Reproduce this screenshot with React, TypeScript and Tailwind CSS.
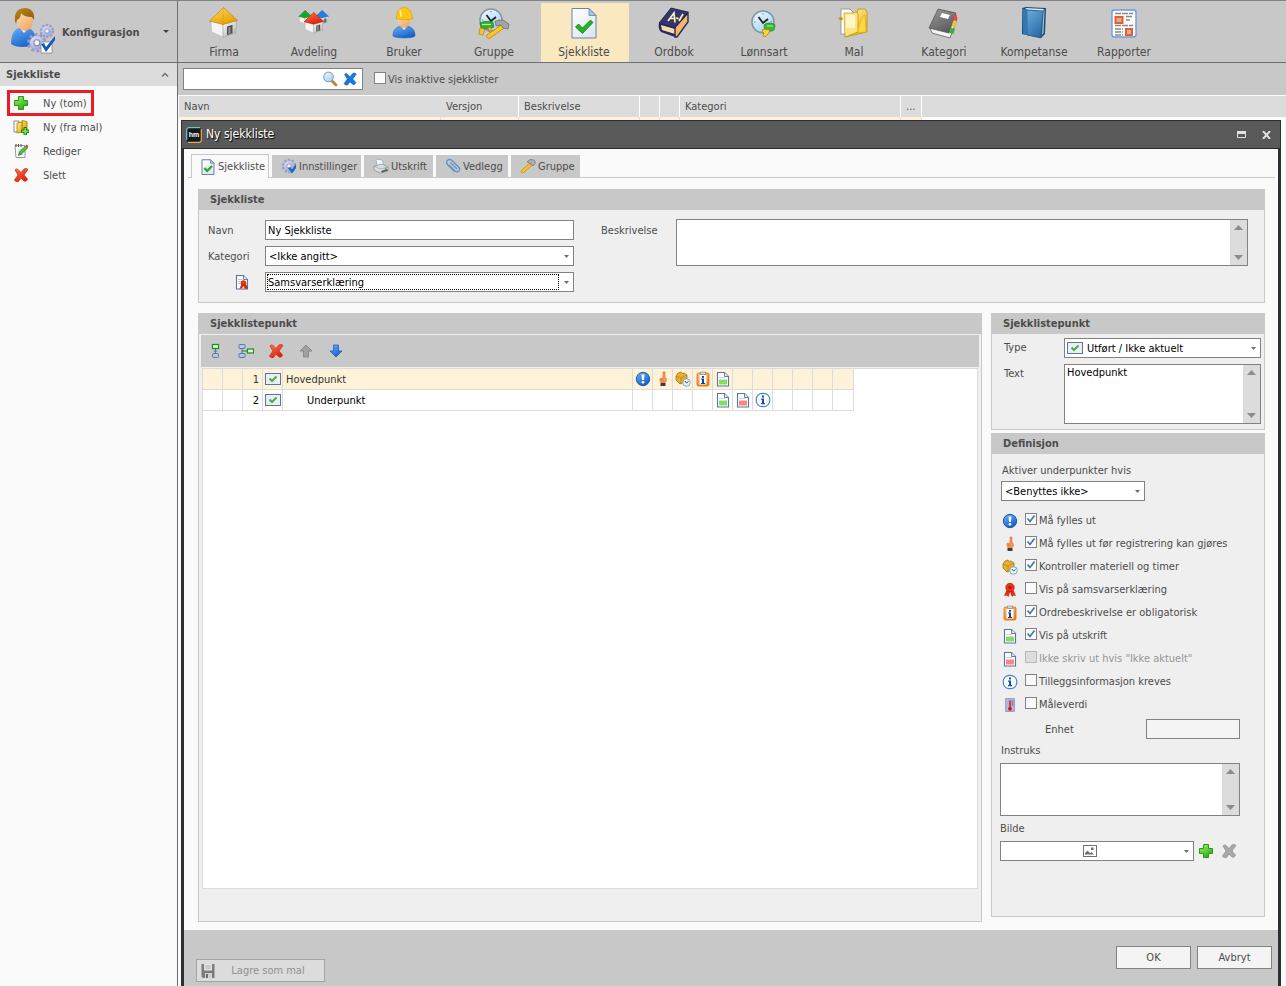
import type { ReactNode } from 'react'

/* ---------- Shared drawing pieces ---------- */

function Gradients() {
  const list = [
    ['gRoof', '#ffd95a', '#e8a000'],
    ['gWall', '#ffffff', '#b9b9b9'],
    ['gSkin', '#ffe0b8', '#f0a868'],
    ['gBlue', '#6fb3f5', '#1560c8'],
    ['gGreen', '#a4f25c', '#2fae1c'],
    ['gRed', '#ff7a55', '#dc2008'],
    ['gGold', '#fff0a0', '#e8b820'],
    ['gGlass', '#f4fbff', '#a8d4f4'],
    ['gGrey', '#9a9a9a', '#5c5c5c'],
    ['gGear', '#e4e6f8', '#a0a5d0'],
    ['gBook', '#6cacdc', '#2a6da8'],
    ['gPage', '#ffffff', '#dfe8f4'],
    ['gOrange', '#ffc070', '#f08020'],
    ['gHair', '#c08a20', '#8a5a08']
  ]
  return (
    <svg width="0" height="0" className="absolute" aria-hidden="true">
      <defs>
        {list.map(([id, from, to]) => (
          <linearGradient key={id} id={id} x1="0" y1="0" x2="0.6" y2="1">
            <stop offset="0" stopColor={from} />
            <stop offset="1" stopColor={to} />
          </linearGradient>
        ))}
      </defs>
    </svg>
  )
}

function Icon({ size = 16, box = 16, children }: { size?: number; box?: number; children: ReactNode }) {
  return (
    <svg width={size} height={size} viewBox={`0 0 ${box} ${box}`} className="block shrink-0" aria-hidden="true">
      {children}
    </svg>
  )
}

function House({ roof, edge }: { roof: string; edge: string }) {
  return (
    <>
      <path d="M3 13.500 15 17v13L3.500 25z" fill="#f4f4f4" stroke="#b0b0b0" strokeWidth=".5" />
      <path d="M15 17 28.500 13l-.8 13L15 30.500z" fill="url(#gWall)" stroke="#999" strokeWidth=".5" />
      <path d="m19 19.500 5.500-1.800v8.500l-5.500 2z" fill="#505050" />
      <path d="m20.300 20.500 2.200-.7v6.500l-2.200.8z" fill="#909090" />
      <path d="M15.500.500 29.500 13.500 15 17.500 1.500 14z" fill={roof} stroke={edge} strokeWidth=".6" strokeLinejoin="round" />
      <path d="M15.500.500 15 17.500" stroke={edge} strokeWidth=".5" opacity=".4" />
    </>
  )
}

function Gear() {
  return (
    <>
      <circle cx="8" cy="8" r="6" fill="none" stroke="#959ac8" strokeWidth="2.400" strokeDasharray="2.200 1.570" />
      <circle cx="8" cy="8" r="5.200" fill="url(#gGear)" stroke="#a0a5d0" strokeWidth=".5" />
      <circle cx="8" cy="8" r="2.200" fill="#f4f4fa" stroke="#8388ba" strokeWidth=".8" />
    </>
  )
}

function ClockFace() {
  return (
    <>
      <circle cx="13" cy="13" r="11" fill="url(#gGlass)" stroke="#7f97a8" strokeWidth="1.600" />
      <path d="m8.500 8 4.500 6 5-4" fill="none" stroke="#222" strokeWidth="1.800" />
      <path d="M13 4v1.500M13 20.500V22M4 13h1.500M20.500 13H22" stroke="#6a8aa4" />
    </>
  )
}

/* ---------- 32px toolbar icons ---------- */

const FirmaIcon = () => (
  <Icon size={32} box={32}>
    <House roof="url(#gRoof)" edge="#b87800" />
  </Icon>
)

const AvdelingIcon = () => (
  <Icon size={32} box={32}>
    <g transform="translate(0 3) scale(.46)">
      <House roof="#18a828" edge="#087010" />
    </g>
    <g transform="translate(17 3) scale(.46)">
      <House roof="#2080e8" edge="#1050a0" />
    </g>
    <g transform="translate(5 5) scale(.7)">
      <House roof="url(#gRed)" edge="#a81000" />
    </g>
  </Icon>
)

const BrukerIcon = () => (
  <Icon size={32} box={32}>
    <path d="M5 29c0-7 4-10 11-10s11 3 11 10c-3 2.500-19 2.500-22 0z" fill="url(#gBlue)" stroke="#1a5cb0" strokeWidth=".6" />
    <path d="m13 19 3 4 3-4z" fill="#fff" />
    <ellipse cx="16" cy="14" rx="6" ry="7" fill="url(#gSkin)" />
    <path d="M8.500 11c0-6 2.500-10.500 7.500-10.500s8 4.500 8 9.500l1.500 1.500c-4 1.500-13 1.500-17.500 0z" fill="#ffc810" stroke="#d89800" strokeWidth=".6" />
    <path d="M12 3c1 2 1 4 .8 6.500" stroke="#fff2a0" strokeWidth="1.600" fill="none" />
  </Icon>
)

const GruppeIcon = () => (
  <Icon size={32} box={32}>
    <ClockFace />
    <path d="M2 16c3-2 9-2 13-1l1 5c-4 2-9 2-13 1z" fill="#30b030" stroke="#107818" strokeWidth=".6" />
    <path d="M4 17.500h9" stroke="#b0f0a0" strokeWidth="1.200" />
    <path d="m2 21 5 1-2 6-4-1zM10 20l4 1-3 4z" fill="#f4c430" stroke="#a87800" strokeWidth=".6" />
    <path d="M9 28 23 18l3 3-14 10c-2 1-4-1-3-3z" fill="#ffc820" stroke="#b07800" strokeWidth=".7" />
    <path d="m17 14 8-1 6 4-1 5-5-1-2-3-5 1z" fill="#a4a4a4" stroke="#686868" strokeWidth=".7" />
  </Icon>
)

const SjekklisteIcon = ({ size = 32 }: { size?: number }) => (
  <Icon size={size} box={32}>
    <path d="M4 1.500h17l7 7v22.500H4z" fill="url(#gPage)" stroke="#6482ac" strokeWidth={size > 16 ? 1 : 2} />
    <path d="M21 1.500v7h7z" fill="#a8c8e8" stroke="#6482ac" strokeWidth={size > 16 ? 0.8 : 1.5} />
    <path d="m7.500 20 3-3 4 4 8-8 2.500 2.500-10.500 11z" fill="#22b422" stroke="#0d8010" strokeWidth=".8" />
  </Icon>
)

const OrdbokIcon = () => (
  <Icon size={32} box={32}>
    <path d="m1 16 16 4v10L3 25c-2-2-3-6-2-9z" fill="#28285c" />
    <path d="m3 18 14 4v5L4 23z" fill="#f8dca8" />
    <path d="M17 20 30 6v9L19 30l-2 0z" fill="#f0b868" stroke="#28285c" strokeWidth="1.400" />
    <path d="m13 1 17 4-13 16-16-5z" fill="#34346e" stroke="#1c1c4c" strokeWidth=".8" />
    <path d="m10 14 6-8 1 9.500M12 11.500h4.500M18 11l2.500.6M21 14l4-7" fill="none" stroke="#fff3b0" strokeWidth="1.700" />
  </Icon>
)

const LonnsartIcon = () => (
  <Icon size={32} box={32}>
    <g transform="translate(2 2)">
      <ClockFace />
    </g>
    <path d="M16 18c3-3 9-2 11 0l-1 5c-3 2-7 1-9 0z" fill="#38b838" stroke="#148018" strokeWidth=".7" />
    <path d="M19 19h6" stroke="#b8f0a8" />
    <path d="m15 22 7 1-1 3-4 4-2-1 1-3-2-1z" fill="#ffd030" stroke="#a87800" strokeWidth=".7" />
  </Icon>
)

const MalIcon = () => (
  <Icon size={32} box={32}>
    <path d="M3 2h9l3 3v22H3z" fill="#fff" stroke="#888" strokeWidth=".8" />
    <path d="M1 11h3v2M1 11l1 2" stroke="#d8a000" strokeWidth="1.400" />
    <path d="M15 6h4l1-4h7l1 2h1v21L7 30z" fill="url(#gGold)" stroke="#c89000" strokeWidth=".8" />
    <path d="m18 26 7-17 2-1 1 17z" fill="#ffd740" stroke="#d8a420" strokeWidth=".6" />
    <path d="M6 6h8l4-1 2 2v18L7 30z" fill="#fce888" stroke="#c89000" strokeWidth=".8" opacity=".9" />
    <path d="M8 8h9v13H8z" fill="#fffce0" opacity=".7" />
  </Icon>
)

const KategoriIcon = () => (
  <Icon size={32} box={32}>
    <path d="m2 21 2 5 18 5 7-19-1-4z" fill="#f4f4f4" stroke="#505050" strokeWidth=".7" />
    <path d="M10 2 28 6 21 26 1 21z" fill="url(#gGrey)" stroke="#4c4c4c" strokeWidth=".7" />
    <path d="m14 6 8 2-2 4-8-2z" fill="#fff" />
    <path d="m26 8 3 .6V14l-3.500-.5z" fill="#f04820" />
    <path d="m25 14.500 3.500.6-1 5-4-.6z" fill="#f4c020" />
    <path d="m23 21 4 .6-1.500 5.400-4-.7z" fill="#30b830" />
  </Icon>
)

const KompetanseIcon = () => (
  <Icon size={32} box={32}>
    <path d="m4 1 4-1 20 1-1 26-4 4L4 27z" fill="#184c78" />
    <path d="m9 3 16 1-2 27L9 28z" fill="url(#gBook)" stroke="#1c5484" strokeWidth=".6" />
    <path d="m4 1 5 2v25l-4-1z" fill="#3478b0" />
    <path d="m7 1 19 1-1 1.500L9 2.500z" fill="#e8f0f8" />
    <path d="m25.500 4 1-2-1 24-1.500 2z" fill="#a8c8e0" />
  </Icon>
)

const RapporterIcon = () => (
  <Icon size={32} box={32}>
    <rect x="4" y="3" width="24" height="27" rx="2.500" fill="#fff" stroke="#6c9ae0" strokeWidth="1.400" />
    <path
      d="M7 6.500h18M18 9.500h7M18 13h4M7 18.500h18M7 22h8M7 25h8M7 28h8"
      stroke="#868686"
      strokeWidth="1.600"
      strokeDasharray="6 1"
    />
    <rect x="7.500" y="10" width="7" height="6" fill="#b8b8b8" stroke="#f45a20" strokeWidth="2" />
    <rect x="18" y="22" width="6" height="6" fill="#b8b8b8" stroke="#f45a20" strokeWidth="2" />
  </Icon>
)

/* ---------- 16px icons ---------- */

const ConfigUserIcon = () => (
  <Icon size={48} box={48}>
    <path d="M1 36c0-12 5-17 13-17s12 6 12 16c-5 5-20 5-25 1z" fill="url(#gBlue)" />
    <path d="m9 19 5 6 5-6z" fill="#fff" />
    <ellipse cx="15" cy="13" rx="8" ry="10" fill="url(#gSkin)" />
    <path d="M5 13C4 3 9 0 15 0c6 0 10 4 9 12l-2-3c-4 0-9-1-11-4 0 4-2 6-4 7l-1 4z" fill="url(#gHair)" />
    <g transform="translate(29 15)">
      <Gear />
    </g>
    <g transform="translate(16 24) scale(1.350)">
      <Gear />
    </g>
    <path d="M31 34h11v11H31z" fill="#fff" stroke="#888" strokeWidth=".8" />
    <path d="m31 36 3-1 2 4 9-11v4l-9 12z" fill="#1258b8" />
  </Icon>
)

const PlusIcon = () => (
  <Icon>
    <path
      d="M5.500 1.500h5v4h4v5h-4v4h-5v-4h-4v-5h4z"
      fill="url(#gGreen)"
      stroke="#259a1c"
      strokeLinejoin="round"
    />
  </Icon>
)

const CrossIcon = ({ fill = 'url(#gRed)', edge = '#c02808' }: { fill?: string; edge?: string }) => (
  <Icon>
    <path
      d="M2 3c1-1.500 2.500-1.500 3.500 0L8 5.500 11 2c1.500-1 3-.5 4 .5L11 8l3.500 4c-.5 2-2 2.500-3.500 2L8 11l-2.500 3.500C4 15 2 14.500 1.500 13L5 8z"
      fill={fill}
      stroke={edge}
      strokeWidth=".7"
    />
  </Icon>
)

const FolderPlusIcon = () => (
  <Icon>
    <path d="M1 2h5v11H1z" fill="#fff" stroke="#707070" strokeWidth=".8" />
    <path d="m9 1.500 5 1v10H9z" fill="url(#gRoof)" stroke="#a87c00" strokeWidth=".8" />
    <path d="m4 4 5-1v10l-5 1z" fill="url(#gGold)" stroke="#a87c00" strokeWidth=".8" />
    <path d="M11 8.500h2.500V11H16v2.500h-2.500V16H11v-2.500H8.500V11H11z" fill="#7ce048" stroke="#0c7810" strokeWidth=".9" />
  </Icon>
)

const EditIcon = () => (
  <Icon>
    <path d="M2 2.500h10v12H3z" fill="#fff" stroke="#8a8a9a" strokeWidth=".9" />
    <path d="M3 1v3M5.500 1v3M8 1v3" stroke="#555" />
    <path d="M5 7h5M5 9h4M5 11.500h5" stroke="#b8c0d8" strokeWidth=".8" />
    <path d="m5.500 12.500 1-3.500 6-6 2 2-6 6z" fill="#50c838" stroke="#187810" strokeWidth=".8" />
    <path d="m12 3.500 1.500-2 2 1.800-1.500 1.800z" fill="#e04040" />
  </Icon>
)

const SearchIcon = () => (
  <Icon>
    <path d="m9.500 9.500 4.500 4.500" stroke="#c08040" strokeWidth="2.800" strokeLinecap="round" />
    <circle cx="6.500" cy="6" r="4.800" fill="url(#gGlass)" stroke="#88aac4" strokeWidth="1.200" />
  </Icon>
)

const GearCheckIcon = () => (
  <Icon>
    <Gear />
    <path d="m7 10 2-1 2 2.500L15 6v4l-4 5.500z" fill="#1c68c8" />
  </Icon>
)

const PrinterIcon = () => (
  <Icon>
    <path d="m3 1 6 1 2 5-7 1z" fill="#f0f6fc" stroke="#98a4b4" strokeWidth=".7" />
    <path d="m1 8 8-2 6 3v4l-8 2-6-3z" fill="#dcdfe2" stroke="#85898e" strokeWidth=".7" />
    <path d="m1 8 6 3 8-2" fill="none" stroke="#909498" strokeWidth=".6" />
    <path d="m8 13 6-2 1 1.500-6 2z" fill="#50565c" />
    <circle cx="12.500" cy="10.500" r=".8" fill="#40c030" />
  </Icon>
)

const ClipIcon = () => (
  <Icon>
    <path
      d="m4 7 6 6c3 2 6-1 4-3.500L7 2.500C4 0 0 3 2.500 6.500l7 7M5.500 4.500l6.500 6.500"
      fill="none"
      stroke="#5c94cc"
      strokeWidth="1.300"
    />
  </Icon>
)

const HammerIcon = () => (
  <Icon>
    <path d="m1.500 12.500 8-7 2 2-8 7c-1.500 1-3-.5-2-2z" fill="#ffc820" stroke="#b88000" strokeWidth=".7" />
    <path d="m7 4 3-2.500 4 .5 1.500 3-2.500 3-2-2.500z" fill="#b0b0b0" stroke="#707070" strokeWidth=".7" />
  </Icon>
)

const Page = ({ children }: { children: ReactNode }) => (
  <Icon>
    <path d="M2.500 1.500h7l4 4v9.500h-11z" fill="#fff" stroke="#5874a0" strokeWidth="1.100" />
    <path d="M9.500 1.500v4h4" fill="#dce8f8" stroke="#5874a0" strokeWidth=".9" />
    {children}
  </Icon>
)

const GreenPageIcon = () => (
  <Page>
    <path d="M4 6.500h6" stroke="#c0d0e8" />
    <path d="M4 8.500h8v5H4z" fill="#84dc60" />
  </Page>
)

const RedPageIcon = () => (
  <Page>
    <path d="M4 6.500h6" stroke="#c0d0e8" />
    <path d="M4 8.500h8v5H4z" fill="#ff8484" />
  </Page>
)

const CertificateIcon = () => (
  <Page>
    <path d="M4 5.500h4M4 7.500h3M4 9.500h3" stroke="#b8c8e0" />
    <circle cx="9.500" cy="9" r="2.800" fill="#e03818" />
    <path d="m7.500 10-2 5 2.500-.8L9.500 12l1.500 3 3-.5-2-4.500z" fill="#d42808" />
  </Page>
)

const ImportantIcon = () => (
  <Icon>
    <circle cx="8" cy="8" r="6.700" fill="url(#gBlue)" stroke="#0c50a8" strokeWidth=".9" />
    <path d="M6.500 3.500h3L9 9H7z" fill="#fff" />
    <circle cx="8" cy="11.300" r="1.300" fill="#fff" />
  </Icon>
)

const FingerIcon = () => (
  <Icon>
    <path d="M8 1h2v6l1.300.5v2.500L9.800 12H6.200L5 9.800V7.500L8 7z" fill="#f8985c" stroke="#d8692c" strokeWidth=".6" />
    <path d="M6.500 8v2M8.200 8.300v2" stroke="#d8692c" strokeWidth=".6" />
    <path d="M5.500 12h5v3h-5z" fill="#3c3c44" />
  </Icon>
)

const BoxClockIcon = () => (
  <Icon>
    <path d="m1 5 2-3 3-1 1 1.500 2-.5 3 2v6l-7 3-4-4z" fill="#e8b030" stroke="#a87410" strokeWidth=".8" />
    <path d="m1 5 5 2 6-3M6 7v6" fill="none" stroke="#b07c14" strokeWidth=".7" />
    <circle cx="11.500" cy="11.500" r="3.800" fill="#e4f4ff" stroke="#78a0bc" strokeWidth=".9" />
    <path d="m9.800 10 1.700 2 2-1.500" fill="none" stroke="#333" strokeWidth=".9" />
  </Icon>
)

const RosetteIcon = () => (
  <Icon>
    <path d="m5 7-3 7 3-.5 1.500 1.500L8 10l2 5 1.500-1.500 2.500.5-3-7z" fill="#e03010" />
    <circle cx="8" cy="5.500" r="4.200" fill="#e83818" stroke="#c01c00" strokeWidth=".8" />
    <circle cx="8" cy="5.500" r="1.800" fill="#b01800" />
  </Icon>
)

const ClipboardIcon = () => (
  <Icon>
    <rect x="2" y="2" width="12" height="13" rx="1.500" fill="url(#gOrange)" stroke="#d07010" strokeWidth=".8" />
    <path d="M4.500 4h7v9.500h-7z" fill="#fff" />
    <path d="M5.500 1h5v2.500h-5z" fill="#d8d8d8" stroke="#808080" strokeWidth=".6" />
    <path d="M7 5h2v1.700H7zM6 7.500h3V12h1.200v1H6v-1h1V8.500H6z" fill="#1040a0" />
  </Icon>
)

const InfoIcon = () => (
  <Icon>
    <rect x="1.300" y="1.300" width="13.400" height="13.400" rx="6" fill="#fff" stroke="#4888d0" strokeWidth="1.200" />
    <path d="M7 3.500h2v2H7zM6 6.500h3V11h1v1.200H6V11h1V7.700H6z" fill="#1050b8" />
  </Icon>
)

const ThermoIcon = () => (
  <Icon>
    <path d="M3.500 1.500h9v13h-9z" fill="#b4b4dc" stroke="#8888b8" strokeWidth=".7" />
    <path d="M9.500 4h2M9.500 6h2M9.500 8h2" stroke="#505078" strokeWidth=".8" />
    <path d="M8 3.500v8" stroke="#d82020" strokeWidth="1.600" />
    <circle cx="8" cy="11.800" r="1.900" fill="#d01818" />
  </Icon>
)

const CheckTypeIcon = () => (
  <svg width="16" height="12" viewBox="0 0 16 12" className="block shrink-0" aria-hidden="true">
    <rect x=".5" y=".5" width="15" height="11" fill="#eaeefa" stroke="#5c7890" />
    <path d="m4.500 5.500 2.500 2.500 4.500-4.500" fill="none" stroke="#4cb034" strokeWidth="2" />
  </svg>
)

const AddBelowIcon = () => (
  <Icon>
    <path d="M7.500 5v6M5.500 8h4" stroke="#5478a8" />
    <rect x="4.500" y="1.500" width="6" height="4" fill="#e0ffd8" stroke="#1c8c1c" strokeWidth="1.200" />
    <rect x="4.500" y="10.500" width="6" height="4" rx="1" fill="#b4c8e4" stroke="#5478a8" />
  </Icon>
)

const AddChildIcon = () => (
  <Icon>
    <path d="M4 5v6" stroke="#5478a8" />
    <path d="M4 8h6" stroke="#1c8c1c" />
    <rect x="1" y="1.500" width="6" height="4" rx="1" fill="#b4c8e4" stroke="#5478a8" />
    <rect x="1" y="10.500" width="6" height="4" rx="1" fill="#b4c8e4" stroke="#5478a8" />
    <rect x="9.500" y="6" width="6" height="4" fill="#e0ffd8" stroke="#1c8c1c" strokeWidth="1.200" />
  </Icon>
)

const ArrowUpIcon = () => (
  <Icon>
    <path d="m8 2 6 6h-3.500v6h-5V8H2z" fill="#a0a0a0" stroke="#808080" strokeWidth=".8" />
  </Icon>
)

const ArrowDownIcon = () => (
  <Icon>
    <path d="m8 14 6-6h-3.500V2h-5v6H2z" fill="url(#gBlue)" stroke="#1860c0" strokeWidth=".8" />
  </Icon>
)

const DisketteIcon = () => (
  <Icon>
    <path d="M1.500 1h13v14H3l-1.500-1.500z" fill="#7c7c7c" />
    <path d="M4 1h8v6.500H4z" fill="#e4e4e4" />
    <path d="M5 3h6M5 5h6" stroke="#b0b0b0" />
    <path d="M5 10h7v5H5z" fill="#d0d0d0" />
    <path d="M6 11h2v4H6z" fill="#707070" />
  </Icon>
)

const PictureIcon = () => (
  <svg width="14" height="12" viewBox="0 0 14 12" className="block" aria-hidden="true">
    <rect x=".5" y=".5" width="13" height="11" fill="#fff" stroke="#707070" />
    <path d="M2 9.500V8l2.500-2.500L7 8l1.500-1L11 9.500z" fill="#707070" />
    <rect x="8" y="2.500" width="2.500" height="2.500" fill="#707070" />
  </svg>
)

const LogoIcon = () => (
  <svg width="16" height="16" viewBox="0 0 16 16" className="block shrink-0" aria-hidden="true">
    <rect x=".7" y=".7" width="14.600" height="14.600" rx="2.500" fill="#14181c" />
    <path d="M14 .7H3A2.300 2.300 0 0 0 .7 3v10" fill="none" stroke="#6cc8c0" strokeWidth="1.200" />
    <path d="M15.300 2v11a2.300 2.300 0 0 1-2.300 2.300H2" fill="none" stroke="#e0b050" strokeWidth="1.200" />
    <text x="8" y="10" textAnchor="middle" fontSize="7" fontWeight="700" fill="#fff" fontFamily="Liberation Sans">
      hm
    </text>
  </svg>
)

const Caret = () => (
  <svg width="5" height="3" viewBox="0 0 5 3" className="block" aria-hidden="true">
    <path d="M0 0h5L2.500 3z" fill="#6e6e6e" />
  </svg>
)

/* ---------- Form controls ---------- */

type SelectProps = { id: string; value: string; className?: string; inset?: string; focused?: boolean; icon?: ReactNode }

function Select({ id, value, className = '', inset = 'pl-1', focused, icon }: SelectProps) {
  return (
    <div className={`relative h-5 border border-[#828282] bg-white ${className}`}>
      <select
        id={id}
        className={`block h-full w-full appearance-none bg-transparent pr-4 text-black outline-none ${inset}`}
      >
        <option>{value}</option>
      </select>
      {focused && (
        <span className="pointer-events-none absolute inset-y-px right-[14px] left-px border border-dotted border-black" />
      )}
      {icon && <span className="pointer-events-none absolute inset-y-0 left-[2px] flex items-center">{icon}</span>}
      <span className="pointer-events-none absolute inset-y-0 right-1 flex items-center">
        <Caret />
      </span>
    </div>
  )
}

function TextArea({ id, value = '', className = '' }: { id: string; value?: string; className?: string }) {
  return (
    <div className={`flex border border-[#828282] bg-white ${className}`}>
      <textarea
        id={id}
        defaultValue={value}
        className="block h-full min-w-0 flex-1 resize-none overflow-hidden px-[2px] text-black outline-none"
      />
      <div className="flex w-[17px] shrink-0 flex-col items-center justify-between bg-[#dcdcdc] py-[5px]">
        <svg width="9" height="5" viewBox="0 0 9 5" aria-hidden="true">
          <path d="M0 5h9L4.500 0z" fill="#8c8c8c" />
        </svg>
        <svg width="9" height="5" viewBox="0 0 9 5" aria-hidden="true">
          <path d="M0 0h9L4.500 5z" fill="#8c8c8c" />
        </svg>
      </div>
    </div>
  )
}

function CheckBox({ label, checked, disabled }: { label: string; checked?: boolean; disabled?: boolean }) {
  return (
    <label className={`flex items-start gap-[2px] ${disabled ? 'text-[#969696]' : ''}`}>
      <span className="grid size-3 shrink-0">
        <input
          type="checkbox"
          defaultChecked={checked}
          disabled={disabled}
          className="peer col-start-1 row-start-1 size-3 appearance-none border border-[#828282] bg-[#fafafa] disabled:border-[#b8b8b8] disabled:bg-[#dcdcdc]"
        />
        <svg
          viewBox="0 0 12 12"
          className="pointer-events-none invisible col-start-1 row-start-1 size-3 peer-checked:visible"
          aria-hidden="true"
        >
          <path d="m2.500 5.500 2.500 3 4.500-6" fill="none" stroke="#3c78b8" strokeWidth="1.700" />
        </svg>
      </span>
      {label}
    </label>
  )
}

function Panel({ title, className = '', children }: { title: string; className?: string; children: ReactNode }) {
  return (
    <section className={`flex flex-col border border-t-0 border-[#c8c8c8] bg-[#efefef] ${className}`}>
      <h2 className="flex h-[21px] shrink-0 items-center bg-[#c8c8c8] pl-[11px] font-bold">{title}</h2>
      {children}
    </section>
  )
}

/* ---------- Data ---------- */

const toolbar = [
  { name: 'Firma', icon: FirmaIcon },
  { name: 'Avdeling', icon: AvdelingIcon },
  { name: 'Bruker', icon: BrukerIcon },
  { name: 'Gruppe', icon: GruppeIcon },
  { name: 'Sjekkliste', icon: SjekklisteIcon, active: true },
  { name: 'Ordbok', icon: OrdbokIcon },
  { name: 'Lønnsart', icon: LonnsartIcon },
  { name: 'Mal', icon: MalIcon },
  { name: 'Kategori', icon: KategoriIcon },
  { name: 'Kompetanse', icon: KompetanseIcon },
  { name: 'Rapporter', icon: RapporterIcon }
]

const actions = [
  { name: 'Ny (tom)', icon: PlusIcon, marked: true },
  { name: 'Ny (fra mal)', icon: FolderPlusIcon },
  { name: 'Rediger', icon: EditIcon },
  { name: 'Slett', icon: CrossIcon }
]

const columns = [
  { name: 'Navn', width: 'w-[262px]', line: '' },
  { name: 'Versjon', width: 'w-[78px]', line: 'border-r' },
  { name: 'Beskrivelse', width: 'w-[121px]', line: 'border-r' },
  { name: '', width: 'w-[20px]', line: 'border-r' },
  { name: '', width: 'w-[20px]', line: 'border-r' },
  { name: 'Kategori', width: 'w-[221px]', line: 'border-r' },
  { name: '...', width: 'w-[21px]', line: 'border-r' }
]

const tabs = [
  { name: 'Sjekkliste', icon: <SjekklisteIcon size={16} />, width: 'w-[78px]', active: true },
  { name: 'Innstillinger', icon: <GearCheckIcon />, width: 'w-[89px]' },
  { name: 'Utskrift', icon: <PrinterIcon />, width: 'w-[69px]' },
  { name: 'Vedlegg', icon: <ClipIcon />, width: 'w-[72px]' },
  { name: 'Gruppe', icon: <HammerIcon />, width: 'w-[69px]' }
]

const rows = [
  {
    no: 1,
    name: 'Hovedpunkt',
    selected: true,
    flags: [ImportantIcon, FingerIcon, BoxClockIcon, ClipboardIcon, GreenPageIcon, null, null, null, null, null, null]
  },
  {
    no: 2,
    name: 'Underpunkt',
    selected: false,
    flags: [null, null, null, null, GreenPageIcon, RedPageIcon, InfoIcon, null, null, null, null]
  }
]

const options = [
  { label: 'Må fylles ut', icon: ImportantIcon, checked: true },
  { label: 'Må fylles ut før registrering kan gjøres', icon: FingerIcon, checked: true },
  { label: 'Kontroller materiell og timer', icon: BoxClockIcon, checked: true },
  { label: 'Vis på samsvarserklæring', icon: RosetteIcon },
  { label: 'Ordrebeskrivelse er obligatorisk', icon: ClipboardIcon, checked: true },
  { label: 'Vis på utskrift', icon: GreenPageIcon, checked: true },
  { label: 'Ikke skriv ut hvis "Ikke aktuelt"', icon: RedPageIcon, disabled: true },
  { label: 'Tilleggsinformasjon kreves', icon: InfoIcon },
  { label: 'Måleverdi', icon: ThermoIcon }
]

/* ---------- Page parts ---------- */

function Sidebar() {
  return (
    <aside className="flex w-[178px] shrink-0 flex-col border-r border-[#6e6e6e] bg-[#fafafa]">
      <button
        type="button"
        className="flex h-[62px] items-center border-b border-[#6e6e6e] bg-[#c8c8c8] pr-2 pl-[10px] font-bold"
      >
        <ConfigUserIcon />
        <span className="ml-1 flex-1 pt-[2px] text-left">Konfigurasjon</span>
        <svg width="6" height="3" viewBox="0 0 6 3" aria-hidden="true">
          <path d="M0 0h6L3 3z" fill="#404040" />
        </svg>
      </button>
      <h2 className="flex h-[23px] items-center justify-between bg-[#dcdcdc] pr-2 pl-[6px] font-bold">
        Sjekkliste
        <svg width="8" height="5" viewBox="0 0 8 5" aria-hidden="true">
          <path d="m1 4.500 3-3 3 3" fill="none" stroke="#707070" strokeWidth="1.500" />
        </svg>
      </h2>
      <nav className="flex flex-col items-start pt-[5px]">
        {actions.map((action) => (
          <button
            key={action.name}
            type="button"
            className={`ml-2 flex h-6 items-center gap-[14px] pr-[6px] pl-[5px] ${
              action.marked ? 'outline-3 -outline-offset-2 outline-[#ed1c24]' : ''
            }`}
          >
            <action.icon />
            {action.name}
          </button>
        ))}
      </nav>
    </aside>
  )
}

function TopBar() {
  return (
    <nav className="flex h-[62px] shrink-0 gap-[2px] border-b border-[#6e6e6e] bg-[#c8c8c8] pt-[2px] pl-[3px] text-[12px]">
      {toolbar.map((item) => (
        <button
          key={item.name}
          type="button"
          className={`flex w-[88px] flex-col items-center pt-1 pr-[2px] ${item.active ? 'bg-[#fae8c0]' : ''}`}
        >
          <item.icon />
          <span className="mt-[5px] leading-4">{item.name}</span>
        </button>
      ))}
    </nav>
  )
}

function FilterBar() {
  return (
    <div className="flex h-8 shrink-0 items-center bg-[#c8c8c8] pl-[5px]">
      <div className="flex h-[22px] w-[180px] items-center border border-[#828282] bg-white pr-1">
        <input type="text" aria-label="Søk" className="h-full min-w-0 flex-1 px-1 text-black outline-none" />
        <button type="button" aria-label="Søk" className="mr-1">
          <SearchIcon />
        </button>
        <button type="button" aria-label="Tøm søk" className="scale-90">
          <CrossIcon fill="#1878e0" edge="#1060b8" />
        </button>
      </div>
      <div className="ml-[11px]">
        <CheckBox label="Vis inaktive sjekklister" />
      </div>
    </div>
  )
}

function ListHeader() {
  return (
    <table className="w-full shrink-0 table-fixed border-separate border-spacing-0 border-t border-l border-[#fafafa]">
      <thead>
        <tr className="h-[21px] bg-[#dcdcdc]">
          {columns.map((column, i) => (
            <th
              key={i}
              scope="col"
              className={`border-white p-0 pl-[5px] text-left font-normal ${column.width} ${column.line}`}
            >
              {column.name}
            </th>
          ))}
          <th scope="col" className="p-0" />
        </tr>
      </thead>
      <tbody>
        <tr className="h-[3px]">
          {columns.map((column, i) => (
            <td key={i} className="border-r border-[#dcdcdc] bg-[#fef2d8] p-0" />
          ))}
          <td className="bg-white p-0" />
        </tr>
      </tbody>
    </table>
  )
}

function Tabs() {
  return (
    <div role="tablist" className="mr-[3px] ml-1 flex h-6 shrink-0 items-end gap-[3px] border-b border-[#c8c8c8] pl-[3px]">
      {tabs.map((tab) => (
        <button
          key={tab.name}
          type="button"
          role="tab"
          aria-selected={!!tab.active}
          className={`flex items-center gap-[2px] whitespace-nowrap ${tab.width} ${
            tab.active
              ? '-mb-px h-6 border border-b-0 border-[#c8c8c8] bg-[#fafafa] pl-2'
              : 'h-[22px] bg-[#c8c8c8] pl-[9px]'
          }`}
        >
          {tab.icon}
          {tab.name}
        </button>
      ))}
    </div>
  )
}

function ChecklistPanel() {
  return (
    <Panel title="Sjekkliste">
      <div className="flex items-start pt-[9px] pr-4 pb-[10px] pl-[9px]">
        <div className="grid grid-cols-[57px_309px] items-center gap-y-[6px] pt-px">
          <label htmlFor="navn">Navn</label>
          <input
            id="navn"
            type="text"
            defaultValue="Ny Sjekkliste"
            className="h-5 w-full border border-[#828282] bg-white px-[2px] text-black outline-none"
          />
          <label htmlFor="kategori">Kategori</label>
          <Select id="kategori" value="<Ikke angitt>" inset="pl-[3px]" />
          <label htmlFor="erklaering" aria-label="Samsvarserklæring" className="flex justify-end pr-[15px]">
            <CertificateIcon />
          </label>
          <Select id="erklaering" value="Samsvarserklæring" inset="pl-[2px]" focused />
        </div>
        <label htmlFor="beskrivelse" className="ml-[27px] flex h-[22px] w-[75px] shrink-0 items-center">
          Beskrivelse
        </label>
        <TextArea id="beskrivelse" className="h-[47px] min-w-0 flex-1" />
      </div>
    </Panel>
  )
}

function PointsPanel() {
  const tools = [
    { name: 'Nytt punkt', icon: <AddBelowIcon /> },
    { name: 'Nytt underpunkt', icon: <AddChildIcon /> },
    { name: 'Slett', icon: <CrossIcon /> },
    { name: 'Flytt opp', icon: <ArrowUpIcon /> },
    { name: 'Flytt ned', icon: <ArrowDownIcon /> }
  ]
  return (
    <Panel title="Sjekklistepunkt" className="min-w-0 flex-1">
      <div className="mx-[2px] mt-px flex h-8 shrink-0 items-center gap-[14px] bg-[#c8c8c8] pl-[7px]">
        {tools.map((tool) => (
          <button key={tool.name} type="button" aria-label={tool.name}>
            {tool.icon}
          </button>
        ))}
      </div>
      <div className="mx-[3px] mt-px mb-8 flex-1 border border-[#dcdcdc] bg-white">
        <table className="w-[651px] table-fixed border-separate border-spacing-0 text-black">
          <tbody>
            {rows.map((row) => (
              <tr
                key={row.no}
                className={`h-[21px] *:border-r *:border-b *:border-[#dcdcdc] *:p-0 ${row.selected ? 'bg-[#fef2d8] text-[#333]' : ''}`}
              >
                <td className="w-[20px]" />
                <td className="w-[20px]" />
                <td className="w-[20px] text-right">
                  <span className="pr-[3px]">{row.no}</span>
                </td>
                <td className="w-[20px]">
                  <span className="flex justify-center">
                    <CheckTypeIcon />
                  </span>
                </td>
                <td className="w-[350px]">
                  <span className={row.selected ? 'pl-[3px]' : 'pl-6'}>{row.name}</span>
                </td>
                {row.flags.map((Flag, i) => (
                  <td key={i} className={i < row.flags.length - 1 ? 'w-[20px]' : ''}>
                    <span className="flex justify-center">{Flag && <Flag />}</span>
                  </td>
                ))}
              </tr>
            ))}
          </tbody>
        </table>
      </div>
    </Panel>
  )
}

function PointDetails() {
  return (
    <div className="flex w-[274px] shrink-0 flex-col gap-[3px] pb-[5px]">
      <Panel title="Sjekklistepunkt">
        <div className="grid grid-cols-[60px_197px] items-start gap-y-[6px] pt-1 pb-[5px] pl-3">
          <label htmlFor="type" className="leading-5">
            Type
          </label>
          <Select id="type" value="Utført / Ikke aktuelt" inset="pl-[22px]" icon={<CheckTypeIcon />} />
          <label htmlFor="text" className="leading-5">
            Text
          </label>
          <TextArea id="text" value="Hovedpunkt" className="h-[60px]" />
        </div>
      </Panel>
      <Panel title="Definisjon" className="flex-1">
        <div className="flex flex-col items-start pt-[9px] pr-6 pl-2">
          <label htmlFor="aktiver" className="pl-[2px] leading-4">
            Aktiver underpunkter hvis
          </label>
          <Select id="aktiver" value="<Benyttes ikke>" inset="pl-[3px]" className="mt-[2px] ml-px w-36" />
          <ul className="mt-2">
            {options.map((option) => (
              <li key={option.label} className="flex h-[23px] items-center gap-[7px] pl-[2px] whitespace-nowrap">
                <option.icon />
                <CheckBox label={option.label} checked={option.checked} disabled={option.disabled} />
              </li>
            ))}
          </ul>
          <div className="mt-[3px] flex w-full items-center justify-between pl-[45px]">
            <label htmlFor="enhet">Enhet</label>
            <input
              id="enhet"
              type="text"
              className="h-5 w-[94px] border border-[#828282] bg-[#f4f4f4] px-1 text-black outline-none"
            />
          </div>
          <label htmlFor="instruks" className="mt-1 pl-px leading-4">
            Instruks
          </label>
          <TextArea id="instruks" className="mt-1 h-[53px] w-full" />
          <label htmlFor="bilde" className="mt-[5px] leading-4">
            Bilde
          </label>
          <div className="mt-1 flex w-full items-center">
            <div className="relative min-w-0 flex-1">
              <Select id="bilde" value="" />
              <span className="pointer-events-none absolute inset-y-0 right-[14px] left-0 flex items-center justify-center">
                <PictureIcon />
              </span>
            </div>
            <button type="button" aria-label="Legg til bilde" className="ml-1">
              <PlusIcon />
            </button>
            <button type="button" aria-label="Fjern bilde" className="mr-[3px] ml-[7px]">
              <CrossIcon fill="#a8a8a8" edge="#8c8c8c" />
            </button>
          </div>
        </div>
      </Panel>
    </div>
  )
}

function ChecklistDialog() {
  return (
    <section
      role="dialog"
      aria-labelledby="dialog-title"
      className="mr-[5px] ml-[3px] flex flex-1 flex-col border-x-3 border-t border-[#2c3034] bg-[#fafafa]"
    >
      <header className="-mx-[2px] flex h-7 shrink-0 items-center border-b border-[#2c2c2c] bg-[#595959] pr-[9px] pl-1 text-white">
        <LogoIcon />
        <h1 id="dialog-title" className="ml-1 flex-1 text-[12px] [text-shadow:1px_1px_1px_#000]">
          Ny sjekkliste
        </h1>
        <button type="button" aria-label="Maksimer" className="mr-4">
          <svg width="9" height="8" viewBox="0 0 9 8" aria-hidden="true">
            <path d="M.5.500h8v6h-8z" fill="none" stroke="#e0e0e0" />
            <path d="M0 0h9v3H0z" fill="#e0e0e0" />
          </svg>
        </button>
        <button type="button" aria-label="Lukk">
          <svg width="9" height="8" viewBox="0 0 9 8" aria-hidden="true">
            <path d="m1 0 7 8M8 0 1 8" stroke="#e0e0e0" strokeWidth="2" />
          </svg>
        </button>
      </header>
      <div className="flex flex-1 flex-col pt-[5px]">
        <Tabs />
        <div className="flex flex-1 flex-col gap-[10px] pt-[11px] pr-[13px] pb-2 pl-[14px]">
          <ChecklistPanel />
          <div className="flex flex-1 gap-[9px]">
            <PointsPanel />
            <PointDetails />
          </div>
        </div>
      </div>
      <footer className="flex h-14 shrink-0 items-start bg-[#c8c8c8] pr-[6px] pl-3">
        <button
          type="button"
          disabled
          className="mt-[29px] flex h-[23px] w-[129px] items-center border border-[#a4a4a4] bg-[#dcdcdc] pl-[3px] text-[#909090]"
        >
          <DisketteIcon />
          <span className="flex-1 pr-1">Lagre som mal</span>
        </button>
        <div className="mt-4 ml-auto flex gap-[6px]">
          <button type="button" className="h-[23px] w-[75px] border border-[#828282] bg-[#f4f4f4]">
            OK
          </button>
          <button type="button" className="h-[23px] w-[75px] border border-[#828282] bg-[#f4f4f4]">
            Avbryt
          </button>
        </div>
      </footer>
    </section>
  )
}

function App() {
  return (
    <div className="flex min-h-screen border-t border-[#828282] bg-[#fafafa] font-['DejaVu_Sans_Condensed','Noto_Sans',sans-serif] text-[11px] leading-[15px] text-[#4c4c4c]">
      <Gradients />
      <Sidebar />
      <main className="flex min-w-0 flex-1 flex-col">
        <TopBar />
        <FilterBar />
        <ListHeader />
        <ChecklistDialog />
      </main>
    </div>
  )
}

export default App
